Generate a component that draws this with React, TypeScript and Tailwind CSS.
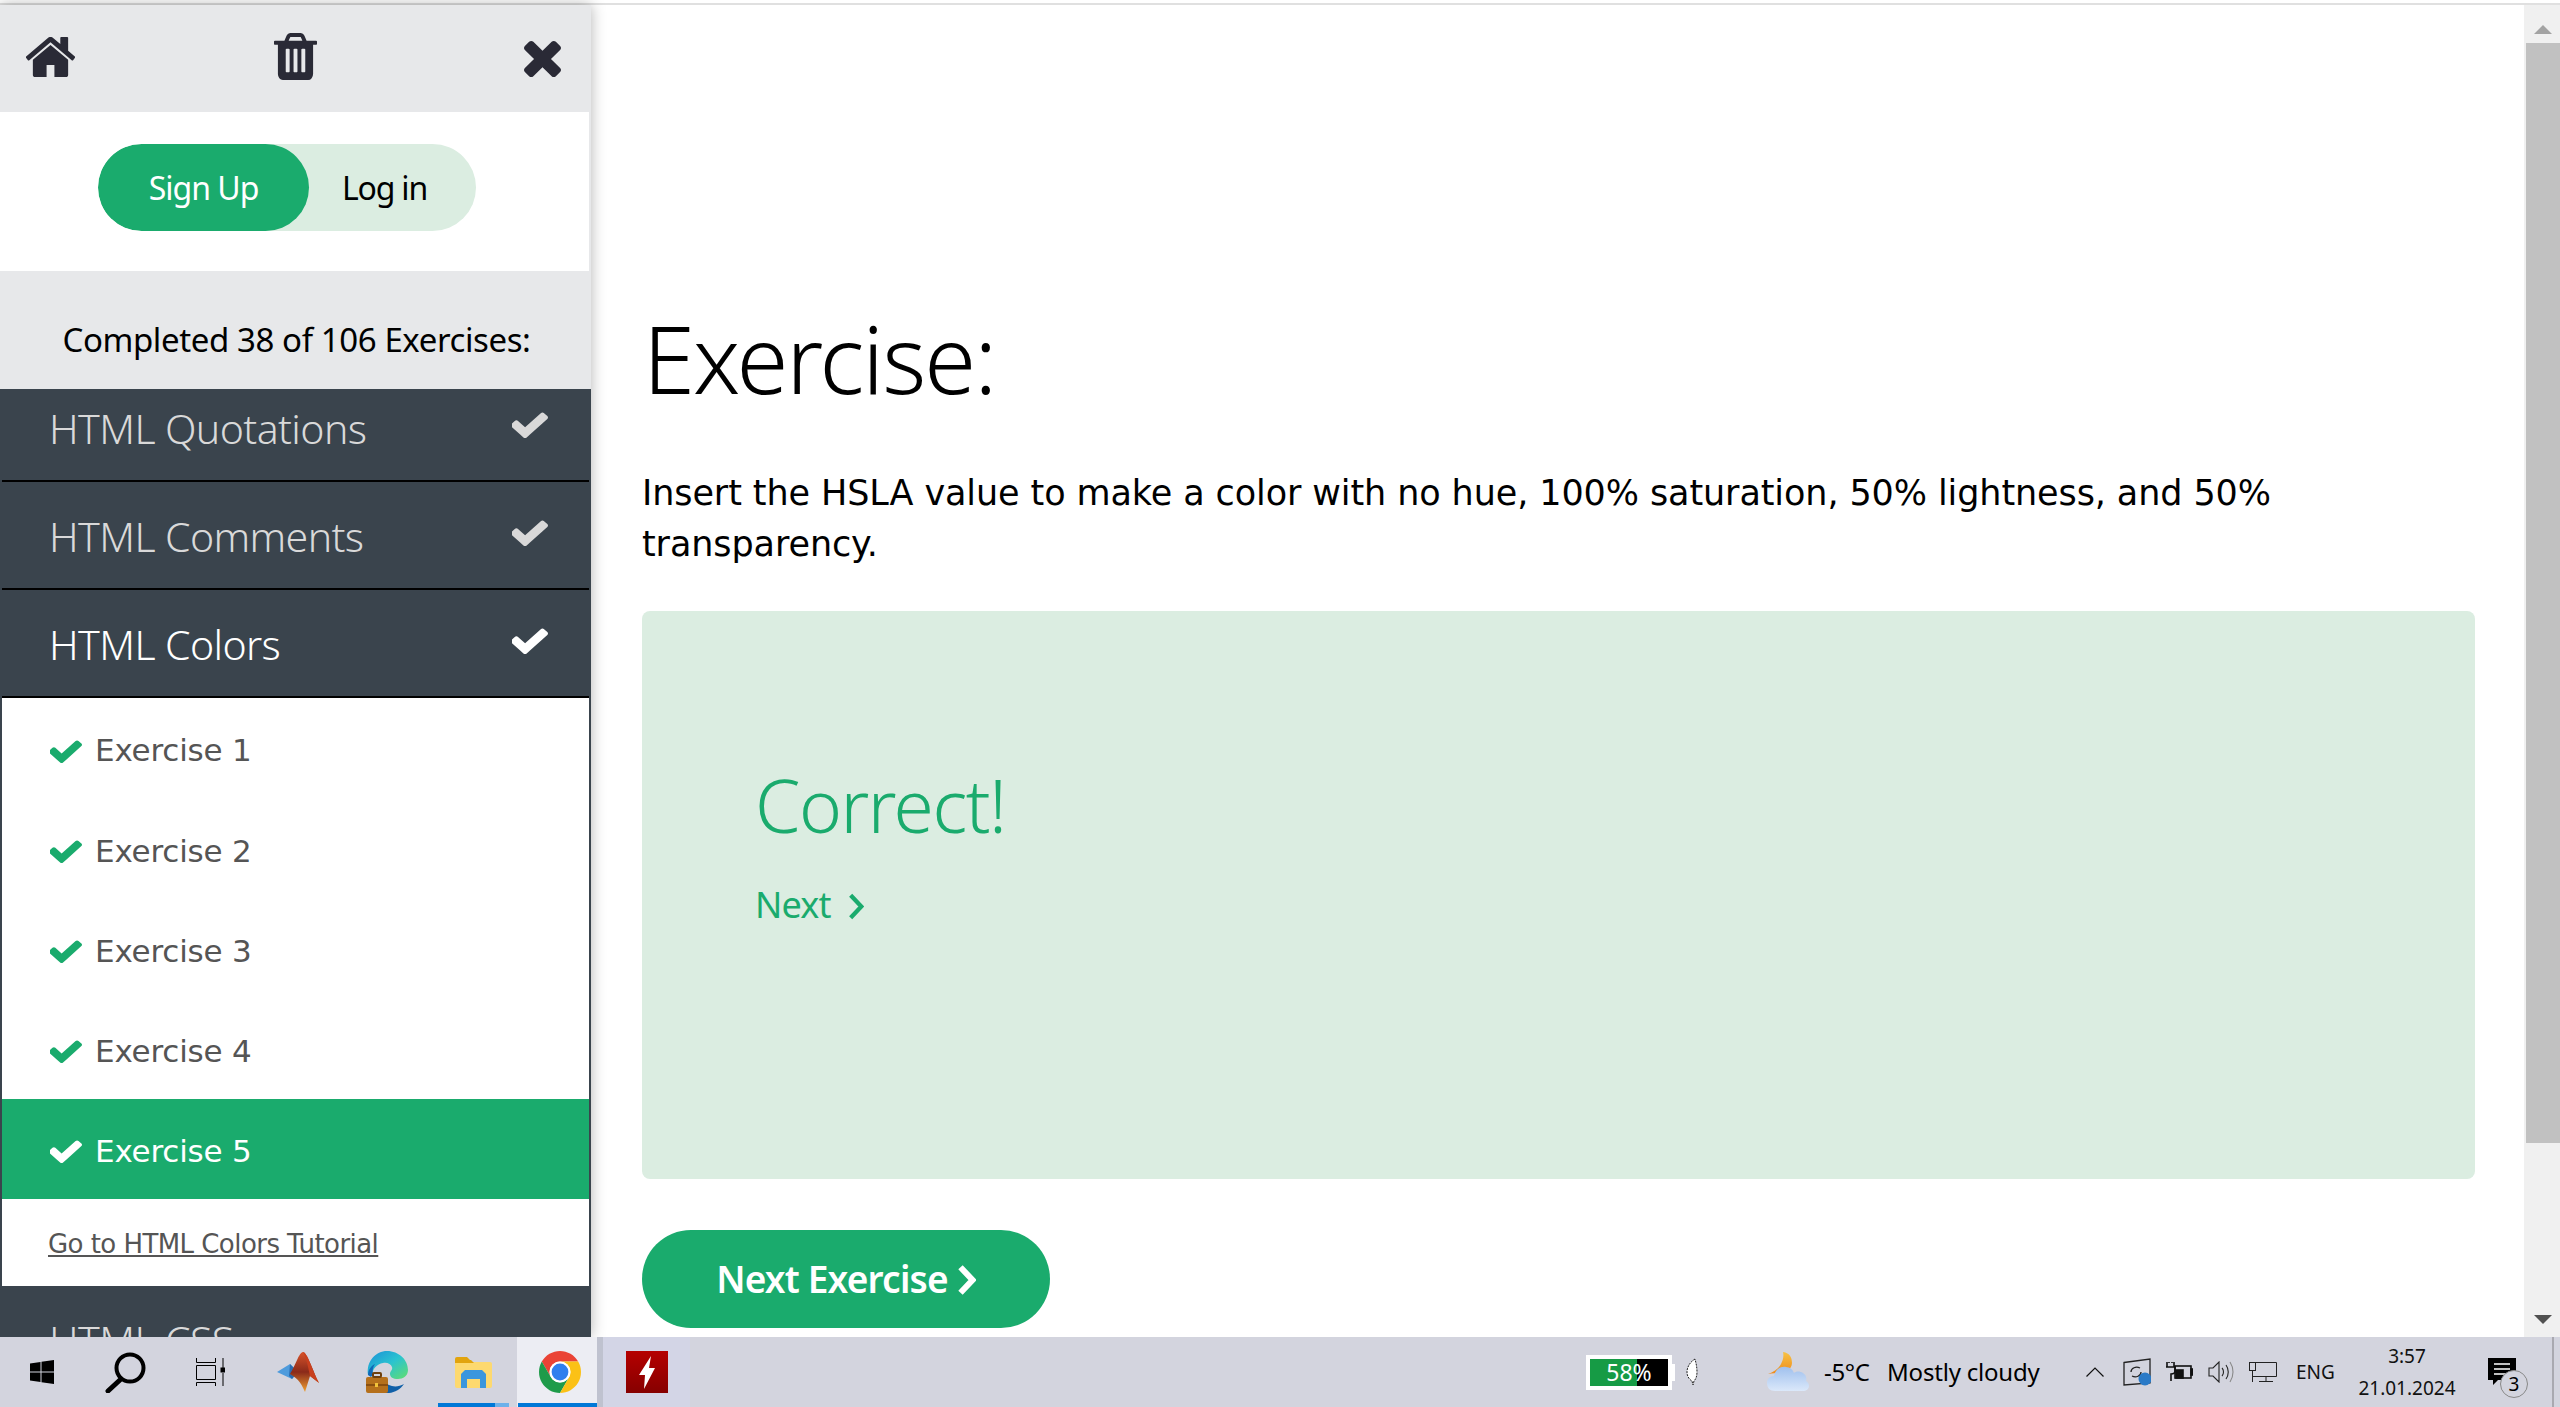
import React from "react";

const HOME =
  "M1472 992v480q0 26-19 45t-45 19h-384v-384h-256v384h-384q-26 0-45-19t-19-45v-480q0-1 .5-3t.5-3l575-474 575 474q1 2 1 6zm223-69l-62 74q-8 9-21 11h-3q-13 0-21-7l-692-577-692 577q-12 8-24 7-13-2-21-11l-62-74q-8-10-7-23.500t11-21.500l719-599q32-26 76-26t76 26l244 204v-195q0-14 9-23t23-9h192q14 0 23 9t9 23v408l219 182q10 8 11 21.500t-7 23.500z";
const TRASH =
  "M704 1376v-704q0-14-9-23t-23-9h-64q-14 0-23 9t-9 23v704q0 14 9 23t23 9h64q14 0 23-9t9-23zm256 0v-704q0-14-9-23t-23-9h-64q-14 0-23 9t-9 23v704q0 14 9 23t23 9h64q14 0 23-9t9-23zm256 0v-704q0-14-9-23t-23-9h-64q-14 0-23 9t-9 23v704q0 14 9 23t23 9h64q14 0 23-9t9-23zm-544-992h448l-48-117q-7-9-17-11h-317q-10 2-17 11zm928 32v64q0 14-9 23t-23 9h-96v948q0 83-47 143.500t-113 60.500h-832q-66 0-113-58.500t-47-141.500v-952h-96q-14 0-23-9t-9-23v-64q0-14 9-23t23-9h309l70-167q15-37 54-63t79-26h320q40 0 79 26t54 63l70 167h309q14 0 23 9t9 23z";
const TIMES =
  "M1490 1322q0 40-28 68l-136 136q-28 28-68 28t-68-28l-294-294-294 294q-28 28-68 28t-68-28l-136-136q-28-28-28-68t28-68l294-294-294-294q-28-28-28-68t28-68l136-136q28-28 68-28t68 28l294 294 294-294q28-28 68-28t68 28l136 136q28 28 28 68t-28 68l-294 294 294 294q28 28 28 68z";
const CHECK =
  "M1671 566q0 40-28 68l-724 724-136 136q-28 28-68 28t-68-28l-136-136-362-362q-28-28-28-68t28-68l136-136q28-28 68-28t68 28l294 295 656-657q28-28 68-28t68 28l136 136q28 28 28 68z";

function Fa({ d, box, className }: { d: string; box: string; className: string }) {
  return (
    <svg viewBox={box} className={className} fill="currentColor" preserveAspectRatio="none">
      <path d={d} />
    </svg>
  );
}

function Check({ className }: { className: string }) {
  return (
    <svg viewBox="170 260 1501 1262" className={className} fill="currentColor" preserveAspectRatio="none">
      <path d={CHECK} />
    </svg>
  );
}

function TopicRow({
  title,
  active,
  noCheck,
  className = "",
}: {
  title: string;
  active?: boolean;
  noCheck?: boolean;
  className?: string;
}) {
  return (
    <div className={`mx-[2px] flex h-[108px] shrink-0 items-center justify-between border-b-2 border-black pl-[47px] pr-[41px] pt-[3px] ${className}`}>
      <span className={`text-[41px] font-light tracking-[-0.6px] ${active ? "text-white" : "text-[#d9d9d9]"}`}>{title}</span>
      {!noCheck && <Check className={`mb-[8px] h-[27px] w-[36px] ${active ? "text-white" : "text-[#d9d9d9]"}`} />}
    </div>
  );
}

function ExerciseRow({ n, current, className = "h-[100px]" }: { n: number; current?: boolean; className?: string }) {
  return (
    <div className={`flex items-center pl-[48px] pt-[4px] ${className} ${current ? "bg-[#1aab6d] text-white" : "bg-white text-[#555555]"}`}>
      <Check className={`h-[24px] w-[32px] ${current ? "text-white" : "text-[#1aab6d]"}`} />
      <span className="ml-[13px] font-['DejaVu_Sans',sans-serif] text-[31px] tracking-[-0.2px]">Exercise {n}</span>
    </div>
  );
}

function Slot({ w, children, className = "" }: { w: string; children: React.ReactNode; className?: string }) {
  return <div className={`relative flex h-full shrink-0 items-center justify-center ${w} ${className}`}>{children}</div>;
}

function MatlabIcon() {
  return (
    <svg viewBox="0 0 42 40" className="h-[40px] w-[42px]">
      <defs>
        <linearGradient id="mat" x1="0" y1="0" x2="0" y2="1">
          <stop offset="0" stopColor="#d8532a" />
          <stop offset="0.5" stopColor="#8a2a1a" />
          <stop offset="1" stopColor="#f0a030" />
        </linearGradient>
      </defs>
      <path d="M0 20l13-8 8 8-6 7z" fill="#4e9bdc" />
      <path d="M13 12l8 8-6 7-3-3z" fill="#2b6cb0" />
      <path d="M13 22C18 15 22 0 26 0c4 0 9 17 16 31l-9-7-5 16c-3-7-6-13-15-18z" fill="url(#mat)" />
      <path d="M26 0c4 0 9 17 16 31l-9-7C31 14 29 5 26 0z" fill="#c8401e" />
    </svg>
  );
}

function EdgeIcon() {
  return (
    <svg viewBox="0 0 42 42" className="h-[42px] w-[42px]">
      <defs>
        <linearGradient id="edg" x1="0" y1="0" x2="1" y2="1">
          <stop offset="0" stopColor="#1b8fd8" />
          <stop offset="0.5" stopColor="#2ac3d0" />
          <stop offset="1" stopColor="#62de6e" />
        </linearGradient>
      </defs>
      <path d="M2 24C0 10 10 0 21 0c12 0 21 9 21 19 0 6-5 9-10 9-5 0-8-2-8-5 0-3 3-4 2-7-1-3-5-5-9-4-6 1-11 6-11 13z" fill="url(#edg)" />
      <path d="M2 24c0-5 3-9 7-11-2 3-3 6-2 10l-2 3z" fill="#1068b8" />
      <path d="M14 41c8 3 19 0 24-8-5 3-11 3-15 1-3-1-5-3-5-3l-4 1z" fill="#0f5fa8" />
      <rect x="0" y="26" width="22" height="16" rx="2" fill="#b5701c" />
      <rect x="0" y="33" width="22" height="2" fill="#8a4f10" />
      <rect x="7" y="22" width="8" height="4" rx="1" fill="none" stroke="#6e3f0c" strokeWidth="2" />
      <rect x="9" y="32" width="3" height="4" fill="#f2c23a" />
    </svg>
  );
}

function ExplorerIcon() {
  return (
    <svg viewBox="0 0 37 31" className="h-[31px] w-[37px]">
      <path d="M0 2a2 2 0 0 1 2-2h10l4 4h-16z" fill="#e2a40e" />
      <path d="M0 5h35a2 2 0 0 1 2 2v22a2 2 0 0 1-2 2H2a2 2 0 0 1-2-2z" fill="#fdd96f" />
      <path d="M0 3h16l3 3H0z" fill="#e2a40e" />
      <path d="M6 31V17l4-4h17l4 4v14h-6v-9H12v9z" fill="#3a96dd" />
    </svg>
  );
}

function ChromeIcon() {
  return (
    <svg viewBox="4 4 40 40" className="ml-[6px] h-[42px] w-[42px]">
      <path d="M6.68 14A20 20 0 0 1 41.32 14H24A10 10 0 0 0 15.34 29Z" fill="#ea4335" />
      <path d="M6.68 14L15.34 29A10 10 0 0 0 32.66 29L24 44A20 20 0 0 1 6.68 14Z" fill="#1e9b4a" />
      <path d="M41.32 14H24A10 10 0 0 1 32.66 29L24 44A20 20 0 0 0 41.32 14Z" fill="#fbc116" />
      <circle cx="24" cy="24" r="10" fill="#ffffff" />
      <circle cx="24" cy="24" r="8" fill="#2f7fee" />
    </svg>
  );
}

function FlashIcon() {
  return (
    <svg viewBox="0 0 42 42" className="h-[42px] w-[42px]">
      <defs>
        <linearGradient id="fl" x1="0" y1="0" x2="0" y2="1">
          <stop offset="0" stopColor="#b50000" />
          <stop offset="1" stopColor="#860000" />
        </linearGradient>
      </defs>
      <rect width="42" height="42" fill="url(#fl)" />
      <path d="M25 5L13 24h6l-1 14 11-21h-6z" fill="#ffffff" />
    </svg>
  );
}

function WeatherIcon() {
  return (
    <svg viewBox="0 0 42 40" className="h-[40px] w-[42px]">
      <defs>
        <linearGradient id="moon" x1="0" y1="0" x2="0" y2="1">
          <stop offset="0" stopColor="#f7c244" />
          <stop offset="1" stopColor="#ee8a1c" />
        </linearGradient>
        <linearGradient id="cloud" x1="0" y1="0" x2="0" y2="1">
          <stop offset="0" stopColor="#9fc0ee" />
          <stop offset="1" stopColor="#dbe8fa" />
        </linearGradient>
      </defs>
      <path d="M16 0c7 1 9 6 9 11 0 3-2 6-4 7-5 3-12 3-20 4 6-2 11-6 13-10 2-4 3-8 2-12z" fill="url(#moon)" />
      <path d="M8 39c-5 0-8-3-8-8 0-4 3-7 7-7 1-6 6-10 12-9 4 0 7 3 8 6 2-2 6-2 9 0 3 2 4 5 3 8 2 1 3 3 3 5 0 3-3 5-6 5z" fill="url(#cloud)" />
    </svg>
  );
}

export default function App() {
  return (
    <div className="flex h-[1407px] w-[2560px] flex-col overflow-hidden bg-white font-['Noto_Sans',sans-serif]">
      {/* top edge of the browser */}
      <div className="mt-[3px] h-[2px] shrink-0 bg-[#e0e0e0]" />

      <div className="flex h-[1332px] shrink-0">
        {/* Sidebar */}
        <aside className="relative z-10 flex w-[591px] shrink-0 flex-col overflow-hidden bg-[#e7e8ea] shadow-[0_0_14px_rgba(0,0,0,0.3)]">
          <div className="flex h-[107px] shrink-0 items-center justify-between pl-[26px] pr-[30px] text-[#2a2a36]">
            <Fa d={HOME} box="96 256 1600 1280" className="mb-[3px] h-[40px] w-[49px]" />
            <Fa d={TRASH} box="192 128 1408 1536" className="mb-[4px] mr-[8px] h-[47px] w-[43px]" />
            <Fa d={TIMES} box="302 366 1188 1188" className="mt-[1px] h-[36px] w-[37px]" />
          </div>

          <div className="mr-[2px] flex h-[159px] shrink-0 items-center justify-center bg-white">
            <div className="mb-[8px] mr-[15px] flex h-[87px] w-[378px] overflow-hidden rounded-full bg-[#dbede1]">
              <div className="flex w-[211px] items-center justify-center rounded-full bg-[#1aab6d] text-[32px] tracking-[-1px] text-white">
                Sign Up
              </div>
              <div className="flex flex-1 items-center justify-center pr-[16px] text-[32px] tracking-[-1.2px] text-black">
                Log in
              </div>
            </div>
          </div>

          <div className="flex h-[118px] shrink-0 items-center justify-center pl-[2px] pt-[20px] text-[33px] tracking-[-0.4px] text-black">
            Completed 38 of 106 Exercises:
          </div>

          <div className="relative flex-1 overflow-hidden bg-[#3a444d]">
            <TopicRow title="HTML Quotations" className="-mt-[15px]" />
            <TopicRow title="HTML Comments" />
            <TopicRow title="HTML Colors" active />
            <div className="mx-[2px] bg-white">
              <ExerciseRow n={1} className="h-[101px]" />
              <ExerciseRow n={2} />
              <ExerciseRow n={3} />
              <ExerciseRow n={4} />
              <ExerciseRow n={5} current />
              <div className="flex h-[87px] items-center pl-[46px] pt-[4px] font-['DejaVu_Sans',sans-serif] text-[26px] tracking-[-0.55px] text-[#555555] underline">
                Go to HTML Colors Tutorial
              </div>
            </div>
            <TopicRow title="HTML CSS" noCheck className="border-transparent" />
          </div>
        </aside>

        {/* Main */}
        <main className="min-w-0 flex-1 pl-[51px] pr-[49px] pt-[293px]">
          <h1 className="ml-[1px] text-[94px] font-light leading-[120px] tracking-[-2px] text-black">Exercise:</h1>
          <p className="mt-[50px] font-['DejaVu_Sans',sans-serif] text-[35px] leading-[51px] tracking-[-0.1px] text-black">
            Insert the HSLA value to make a color with no hue, 100% saturation, 50% lightness, and 50% transparency.
          </p>
          <div className="mt-[41px] flex h-[568px] flex-col justify-start rounded-[8px] bg-[#dbede1] pl-[113px] pt-[149px] text-[#1aab6d]">
            <div className="text-[73px] font-light leading-[90px] tracking-[-1.5px]">Correct!</div>
            <div className="mt-[31px] flex items-center text-[36px] leading-[48px] tracking-[-0.8px]">
              Next
              <svg viewBox="0 0 12 20" className="ml-[17px] mt-[2px] h-[27px] w-[16px]" fill="none" stroke="currentColor" strokeWidth="3.200">
                <path d="M2 1.500l8 8.500-8 8.500" />
              </svg>
            </div>
          </div>
          <div className="mt-[51px] flex h-[98px] w-[408px] items-center justify-center rounded-full bg-[#1aab6d] text-[37px] font-semibold tracking-[-0.8px] text-white">
            Next Exercise
            <svg viewBox="0 0 12 20" className="ml-[9px] mt-[1px] h-[30px] w-[19px]" fill="none" stroke="currentColor" strokeWidth="4">
              <path d="M2 1.500l8 8.500-8 8.500" />
            </svg>
          </div>
        </main>

        {/* Page scrollbar */}
        <div className="flex w-[36px] shrink-0 flex-col bg-[#f0f0f0]">
          <div className="flex h-[38px] shrink-0 items-center justify-center pl-[2px]">
            <svg viewBox="0 0 18 9" className="mt-[11px] h-[9px] w-[18px]" fill="#a3a3a3">
              <path d="M9 0l9 9H0z" />
            </svg>
          </div>
          <div className="ml-[2px] h-[1100px] shrink-0 bg-[#c1c1c1]" />
          <div className="flex flex-1 items-end justify-center pb-[13px] pl-[2px]">
            <svg viewBox="0 0 18 9" className="h-[9px] w-[18px]" fill="#505050">
              <path d="M0 0h18l-9 9z" />
            </svg>
          </div>
        </div>
      </div>

      {/* Windows taskbar */}
      <footer className="relative z-20 flex h-[70px] shrink-0 items-center bg-[#d3d4de] font-['Noto_Sans',sans-serif] text-black">
        <Slot w="w-[84px]">
          <svg viewBox="0 0 24 24" className="h-[24px] w-[24px]" fill="#000000">
            <path d="M0 3.500L10.500 2v9.500H0zM11.500 1.800L24 0v11.500H11.500zM0 12.500h10.500V22L0 20.500zM11.500 12.500H24V24l-12.500-1.800z" />
          </svg>
        </Slot>
        <Slot w="w-[83px]">
          <svg viewBox="0 0 41 41" className="h-[41px] w-[41px]" fill="none" stroke="#000000">
            <circle cx="25" cy="16" r="13.500" strokeWidth="4" />
            <path d="M16 27L3 39" strokeWidth="5" strokeLinecap="round" />
          </svg>
        </Slot>
        <Slot w="w-[86px]">
          <svg viewBox="0 0 29 28" className="h-[28px] w-[29px]" fill="none" stroke="#000000" strokeWidth="1">
            <path d="M.5 0v4.500h19V0M.5 7.500h19v14H.5zM.5 28v-3.500h19V28M27 0v10M27 15v13" />
            <rect x="25" y="10" width="4" height="4" fill="#000000" />
          </svg>
        </Slot>
        <Slot w="w-[90px]">
          <MatlabIcon />
        </Slot>
        <Slot w="w-[87px]">
          <EdgeIcon />
        </Slot>
        <Slot w="w-[87px]">
          <ExplorerIcon />
          <div className="absolute bottom-0 left-[8px] flex h-[4px] w-[71px]">
            <div className="w-[57px] bg-[#0078d7]" />
            <div className="flex-1 bg-[#6db1ea]" />
          </div>
        </Slot>
        <Slot w="w-[80px]" className="bg-[#ecedf3]">
          <ChromeIcon />
          <div className="absolute bottom-0 left-[1px] right-0 h-[4px] bg-[#0078d7]" />
        </Slot>
        <div className="h-full w-[6px] shrink-0 bg-[#bfc2cf]" />
        <div className="flex h-full w-[87px] shrink-0 items-center justify-center bg-[#d3d5e6]">
          <FlashIcon />
        </div>

        {/* Tray */}
        <div className="ml-auto flex h-full items-center">
          <div className="flex h-[35px] w-[89px] shrink-0 items-center">
            <div className="relative flex h-[35px] w-[86px] border-4 border-white bg-black">
              <div className="w-[47px] bg-[#169b45]" />
              <span className="absolute inset-0 flex items-center justify-center text-[23px] text-white">58%</span>
            </div>
            <div className="h-[17px] w-[3px] bg-white" />
          </div>
          <svg viewBox="0 0 12 28" className="ml-[11px] h-[28px] w-[12px] shrink-0">
            <path d="M9 1C4 4 1 9 1 14c0 5 3 8 5 9l1 4 1-4c2-2 3-5 3-9 0-5-1-9-2-13z" fill="#ffffff" stroke="#222222" strokeWidth="1" strokeDasharray="2 1" />
          </svg>
          <div className="ml-[69px] shrink-0">
            <WeatherIcon />
          </div>
          <span className="ml-[15px] w-[63px] shrink-0 whitespace-nowrap text-[24px] tracking-[-0.3px]">-5°C</span>
          <span className="w-[199px] shrink-0 whitespace-nowrap text-[24px] tracking-[-0.2px]">Mostly cloudy</span>
          <svg viewBox="0 0 18 10" className="h-[10px] w-[18px] shrink-0" fill="none" stroke="#111111" strokeWidth="1.200">
            <path d="M.5 9.500L9 1l8.500 8.500" />
          </svg>
          <svg viewBox="0 0 28 28" className="ml-[19px] h-[28px] w-[28px] shrink-0" fill="none" stroke="#222222" strokeWidth="1.300">
            <path d="M1 4.500L27 1v24L1 27z" />
            <path d="M8 14c0-4 5-6 9-4M18 14c0 4-5 6-9 4" />
            <circle cx="22" cy="21" r="6.500" fill="#2a7ac7" stroke="none" />
          </svg>
          <svg viewBox="0 0 28 20" className="ml-[14px] h-[20px] w-[28px] shrink-0" fill="none" stroke="#111111" strokeWidth="1.600">
            <path d="M2 0v5h7V0M4 1v-1M7 1v-1M1 5h9v4c0 2-2 3-4 3v7" />
            <rect x="10" y="4" width="16" height="12" />
            <rect x="11" y="8" width="7" height="8" fill="#111111" />
            <rect x="26" y="7" width="2" height="6" fill="#111111" />
          </svg>
          <svg viewBox="0 0 26 22" className="ml-[15px] h-[22px] w-[26px] shrink-0" fill="none" stroke="#222222" strokeWidth="1.100">
            <path d="M1 7h4l6-6v20l-6-6H1z" />
            <path d="M14 7c2 2 2 6 0 8M18 4c3 4 3 10 0 14" />
            <path d="M22 1c4 6 4 14 0 20" stroke="#888888" />
          </svg>
          <svg viewBox="0 0 28 20" className="ml-[15px] h-[20px] w-[28px] shrink-0" fill="none" stroke="#222222" strokeWidth="1">
            <path d="M7 .5h20.500v14H3" />
            <rect x=".5" y=".5" width="6" height="8" />
            <path d="M3.500 8.500V20M17 14.500v5M10 19.500h14" />
          </svg>
          <span className="ml-[19px] w-[56px] shrink-0 text-[19px] text-[#111111]">ENG</span>
          <div className="flex w-[110px] shrink-0 flex-col items-center text-[19px] leading-[32px] text-[#111111]">
            <span>3:57</span>
            <span>21.01.2024</span>
          </div>
          <div className="relative ml-[26px] h-[28px] w-[28px] shrink-0">
            <svg viewBox="0 0 28 27" className="h-[27px] w-[28px]" fill="#000000">
              <path d="M0 0h28v22H10l-5 5v-5H0z" />
              <path d="M6 6h16M6 11h16M6 16h12" stroke="#ffffff" strokeWidth="1.400" />
            </svg>
            <span className="absolute left-[12px] top-[12px] flex h-[28px] w-[28px] items-center justify-center rounded-full border border-[#888888] bg-[#d3d4de] text-[19px]">
              3
            </span>
          </div>
          <div className="ml-[36px] h-full w-[2px] shrink-0 bg-[#a9a9b0]" />
          <div className="w-[6px] shrink-0" />
        </div>
      </footer>
    </div>
  );
}
